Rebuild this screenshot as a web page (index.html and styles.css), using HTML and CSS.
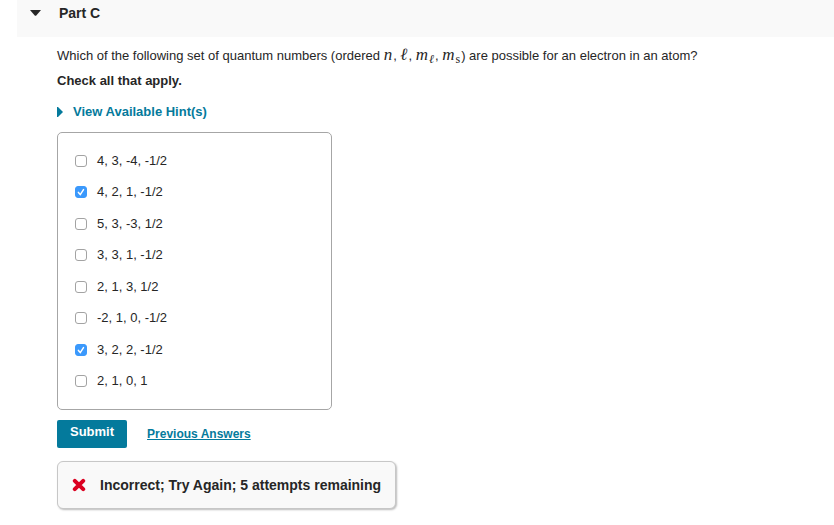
FILE: index.html
```html
<!DOCTYPE html>
<html lang="en">
<head>
<meta charset="utf-8">
<title>Part C</title>
<link rel="stylesheet" href="styles.css">
</head>
<body>
<main class="part">
  <header class="part-header">
    <svg class="caret" viewBox="0 0 11 6" aria-hidden="true"><path d="M0 0h11L6.5 5.3q-1 1-2 0z"/></svg>
    <h1>Part C</h1>
  </header>
  <form class="part-body">
    <p class="question">Which of the following set of quantum numbers (ordered <span class="math"><i>n</i></span>, <span class="math"><i>ℓ</i></span>, <span class="math"><i>m</i><sub><i>ℓ</i></sub></span>, <span class="math"><i>m</i><sub>s</sub></span>) are possible for an electron in an atom?</p>
    <p class="instruction">Check all that apply.</p>
    <a class="hints" href="#hints"><svg class="arrow" viewBox="0 0 6 10" aria-hidden="true"><path d="M0 0h1l5 5-5 5H0z"/></svg>View Available Hint(s)</a>
    <div class="options" id="hints">
      <label><input type="checkbox">4, 3, -4, -1/2</label>
      <label><input type="checkbox" checked>4, 2, 1, -1/2</label>
      <label><input type="checkbox">5, 3, -3, 1/2</label>
      <label><input type="checkbox">3, 3, 1, -1/2</label>
      <label><input type="checkbox">2, 1, 3, 1/2</label>
      <label><input type="checkbox">-2, 1, 0, -1/2</label>
      <label><input type="checkbox" checked>3, 2, 2, -1/2</label>
      <label><input type="checkbox">2, 1, 0, 1</label>
    </div>
    <div class="actions">
      <button type="button">Submit</button>
      <a href="#answers">Previous Answers</a>
    </div>
    <div class="feedback" role="status">
      <svg class="cross" viewBox="0 0 14 14" aria-hidden="true"><path d="M2.8 2.8l8.4 8.4M11.2 2.8l-8.4 8.4"/></svg>
      <span>Incorrect; Try Again; 5 attempts remaining</span>
    </div>
  </form>
</main>
</body>
</html>
```

FILE: styles.css
```css
* {
  box-sizing: border-box;
}

body {
  margin: 0;
  background: #fff;
  color: #262626;
  font-family: "Liberation Sans", Arial, sans-serif;
  font-size: 13px;
  line-height: 16px;
}

.part {
  margin-left: 17px;
}

.part-header {
  display: flex;
  align-items: center;
  gap: 18px;
  padding: 5px 13px 16px;
  background: #f9f9f9;
}

.caret {
  width: 11px;
  height: 6px;
  fill: #262626;
}

h1 {
  margin: 0;
  font-size: 14px;
  line-height: 16px;
}

.part-body {
  display: flex;
  flex-direction: column;
  align-items: flex-start;
  padding: 8px 40px;
}

.question {
  margin: 0;
  line-height: 22px;
}

.math {
  margin-right: 1px;
  font-family: "Liberation Serif", serif;
  font-size: 17px;
  line-height: 16px;
}

.math sub {
  padding-left: 1px;
  font-size: 12px;
  line-height: 0;
  vertical-align: -3px;
}

.instruction {
  margin: 6px 0 15px;
  font-weight: bold;
}

.hints {
  display: flex;
  align-items: center;
  gap: 10px;
  color: #047a9c;
  font-weight: bold;
  text-decoration: none;
}

.arrow {
  width: 6px;
  height: 10px;
  fill: #047a9c;
}

.options {
  display: grid;
  grid-auto-rows: 1fr;
  width: 275px;
  max-width: 100%;
  min-height: 278px;
  margin-top: 12px;
  padding: 12px 17px;
  border: 1px solid #a6a6a6;
  border-radius: 5px;
}

.options label {
  display: flex;
  align-items: center;
  gap: 10px;
}

.options input {
  appearance: none;
  width: 12px;
  height: 12px;
  margin: 0;
  border: 1px solid #a3a3a3;
  border-radius: 3px;
  background: #fff;
}

.options input:checked {
  border-color: #3b99fc;
  background: #3b99fc url("data:image/svg+xml,%3Csvg xmlns='http://www.w3.org/2000/svg' viewBox='0 0 12 12'%3E%3Cpath d='M3.4 6.4l1.9 2.2 3.2-5' fill='none' stroke='white' stroke-width='1.5' stroke-linecap='round'/%3E%3C/svg%3E") center / 12px 12px;
}

.actions {
  display: flex;
  align-items: center;
  gap: 20px;
  margin-top: 10px;
}

.actions button {
  padding: 4px 13px 8px;
  border: 0;
  border-radius: 2px;
  background: #047a9c;
  color: #fff;
  font: bold 13px/16px "Liberation Sans", Arial, sans-serif;
}

.actions a {
  color: #047a9c;
  font-size: 12px;
  font-weight: bold;
}

.feedback {
  display: flex;
  align-items: center;
  gap: 14px;
  margin-top: 13px;
  padding: 15px 14px;
  border: 1px solid #c7c7c7;
  border-radius: 6px;
  background: #f9f9f9;
  box-shadow: 1px 1px 2px #bbb;
  font-size: 14px;
  font-weight: bold;
}

.cross {
  width: 14px;
  height: 14px;
  fill: none;
  stroke: #db0020;
  stroke-width: 4;
  stroke-linecap: round;
}
```
